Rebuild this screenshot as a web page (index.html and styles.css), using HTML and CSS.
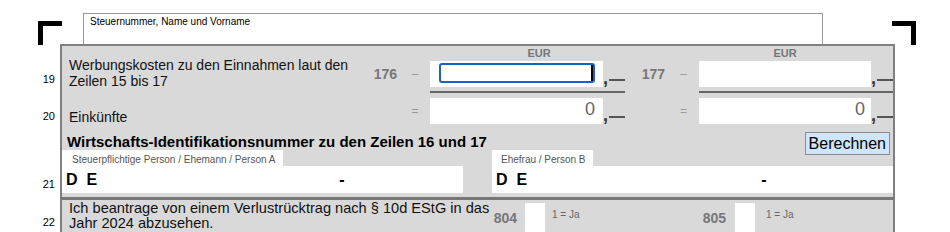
FILE: index.html
```html
<!DOCTYPE html>
<html lang="de">
<head>
    <meta charset="UTF-8">
    <title>Anlage – Werbungskosten</title>
    <link rel="stylesheet" href="styles.css">
</head>
<body>
    <div class="sheet">
        <div class="head">
            <div class="mark mark-left"></div>
            <div class="taxbox">Steuernummer, Name und Vorname</div>
            <div class="mark mark-right"></div>
        </div>

        <div class="line">
            <div class="num num-19">19</div>
            <div class="panel panel-top amounts">
                <div class="desc desc-19">Werbungskosten zu den Einnahmen laut den<br>Zeilen 15 bis 17</div>
                <div class="amt amt-a">
                    <div class="eur eur-a">EUR</div>
                    <span class="code">176</span>
                    <span class="sign">–</span>
                    <div class="field"><div class="focus"><i class="caret"></i></div></div>
                    <div class="tail"><b>,</b><i></i></div>
                    <div class="rule"></div>
                </div>
                <div class="amt amt-b">
                    <div class="eur">EUR</div>
                    <span class="code">177</span>
                    <span class="sign">–</span>
                    <div class="field"></div>
                    <div class="tail"><b>,</b><i></i></div>
                    <div class="rule"></div>
                </div>
            </div>
        </div>

        <div class="line">
            <div class="num num-20">20</div>
            <div class="panel amounts">
                <div class="desc desc-20">Einkünfte</div>
                <div class="amt amt-a amt-plain">
                    <span class="code"></span>
                    <span class="sign">=</span>
                    <div class="field value">0</div>
                    <div class="tail"><b>,</b><i></i></div>
                </div>
                <div class="amt amt-b amt-plain">
                    <span class="code"></span>
                    <span class="sign">=</span>
                    <div class="field value value-b">0</div>
                    <div class="tail"><b>,</b><i></i></div>
                </div>
            </div>
        </div>

        <div class="line">
            <div class="num num-21">21</div>
            <div class="panel ident">
                <h2 class="ident-title">Wirtschafts-Identifikationsnummer zu den Zeilen 16 und 17</h2>
                <button class="calc">Berechnen</button>
                <div class="tab tab-a">Steuerpflichtige Person / Ehemann / Person A</div>
                <div class="tab tab-b">Ehefrau / Person B</div>
                <div class="idnr idnr-a"><span>D</span><span class="e">E</span><span class="hy hy-a">-</span></div>
                <div class="idnr idnr-b"><span>D</span><span class="e">E</span><span class="hy hy-b">-</span></div>
            </div>
        </div>

        <div class="line">
            <div class="num num-22">22</div>
            <div class="panel panel-split choice">
                <div class="desc desc-22">Ich beantrage von einem Verlustrücktrag nach § 10d EStG in das<br>Jahr 2024 abzusehen.</div>
                <div class="opt opt-a">
                    <span class="code">804</span>
                    <div class="box"></div>
                    <span class="ja">1 = Ja</span>
                </div>
                <div class="opt opt-b">
                    <span class="code">805</span>
                    <div class="box"></div>
                    <span class="ja">1 = Ja</span>
                </div>
            </div>
        </div>
    </div>
</body>
</html>
```

FILE: styles.css
```css
body {
    margin: 0;
    background: #fff;
    color: #111;
    font-family: "Liberation Sans", Arial, sans-serif;
}
.sheet {
    width: 950px;
}

/* header with corner marks */
.head {
    display: flex;
    align-items: flex-start;
    height: 44px;
}
.mark {
    width: 24px;
    height: 24px;
    margin-top: 21px;
    box-sizing: border-box;
}
.mark-left {
    margin-left: 38px;
    border-top: 5px solid #000;
    border-left: 5px solid #000;
}
.mark-right {
    margin-left: 69px;
    border-top: 5px solid #000;
    border-right: 5px solid #000;
}
.taxbox {
    margin: 13px 0 0 21px;
    width: 740px;
    height: 31px;
    box-sizing: border-box;
    border: 1px solid #999;
    border-bottom: none;
    padding: 2px 0 0 6px;
    font-size: 10px;
    line-height: 12px;
    color: #000;
}

/* form lines */
.line {
    display: grid;
    grid-template-columns: 60px 835px;
}
.num {
    align-self: end;
    padding-right: 5px;
    font-size: 11px;
    line-height: 13px;
    text-align: right;
    color: #000;
}
.num-19 { padding-bottom: 8px; }
.num-20 { padding-bottom: 5px; }
.num-21 { padding-bottom: 6px; }
.num-22 {
    align-self: start;
    padding-top: 19px;
}
.panel {
    background: #d9d9d9;
    border-left: 2px solid #808080;
    border-right: 2px solid #808080;
}
.panel-top {
    border-top: 2px solid #808080;
}
.panel-split {
    border-top: 3px solid #777;
}
.desc {
    padding-left: 7px;
    font-size: 14px;
    line-height: 16px;
    white-space: nowrap;
}
.desc-19 { padding-bottom: 5px; }
.desc-20 { padding-bottom: 3px; }

/* amount columns */
.amounts {
    display: grid;
    grid-template-columns: 308px 255px 268px;
    align-items: end;
}
.amt {
    display: grid;
    align-items: center;
}
.amt > * {
    grid-row: 2;
}
.amt-plain > * {
    grid-row: 1;
}
.amt-a {
    grid-template-columns: 30px 30px 173px 22px;
}
.amt-b {
    grid-template-columns: 43px 31px 172px 22px;
}
.amt-plain {
    padding: 4px 0;
}
.amt .eur {
    grid-column: 3;
    grid-row: 1;
    height: 15px;
    font-size: 11px;
    line-height: 14px;
    font-weight: bold;
    text-align: center;
    color: #777;
}
.amt .eur-a {
    padding-left: 45px;
}
.code {
    grid-column: 1;
    padding-right: 3px;
    font-size: 14px;
    font-weight: bold;
    text-align: right;
    color: #777;
}
.sign {
    grid-column: 2;
    font-size: 12px;
    text-align: center;
    color: #999;
}
.field {
    grid-column: 3;
    height: 26px;
    background: #fff;
}
.focus {
    display: flex;
    justify-content: flex-end;
    height: 20px;
    margin: 2px 8px 4px 9px;
    box-sizing: border-box;
    border: 2px solid #1565c0;
    border-radius: 3px;
}
.caret {
    width: 2px;
    background: #000;
}
.value {
    padding-right: 8px;
    font-size: 18px;
    line-height: 23px;
    text-align: right;
    color: #666;
}
.value-b {
    padding-right: 6px;
}
.tail {
    grid-column: 4;
    align-self: end;
    display: flex;
    align-items: flex-end;
    height: 26px;
}
.tail b {
    width: 5px;
    font-size: 18px;
    line-height: 18px;
    color: #333;
}
.tail i {
    width: 16px;
    height: 2px;
    margin: 0 0 6px 1px;
    background: #555;
}
.amt .rule {
    grid-column: 3 / 5;
    grid-row: 3;
    height: 2px;
    margin: 4px 0 1px;
    background: #666;
}

/* identification number */
.ident {
    display: grid;
    grid-template-columns: 401px 29px 401px;
    grid-template-rows: 22px 16px 27px;
    padding-bottom: 4px;
}
.ident-title {
    grid-column: 1 / 3;
    grid-row: 1;
    margin: 0;
    padding: 5px 0 0 5px;
    font-size: 15px;
    line-height: 17px;
    color: #000;
}
.calc {
    grid-column: 3;
    grid-row: 1 / 3;
    justify-self: end;
    align-self: start;
    height: 23px;
    margin: 4px 3px 0 0;
    padding: 0 3px;
    border: 1px solid #8c8c8c;
    border-radius: 0;
    background: #cfe5fa;
    font-family: "Liberation Sans", Arial, sans-serif;
    font-size: 16px;
    color: #000;
}
.tab {
    grid-row: 2;
    justify-self: start;
    padding: 3px 8px 0 10px;
    background: #fff;
    font-size: 10px;
    line-height: 13px;
    color: #555;
}
.tab-a { grid-column: 1; }
.tab-b {
    grid-column: 3;
    padding: 3px 7px 0 9px;
}
.idnr {
    grid-row: 3;
    display: flex;
    align-items: center;
    padding-left: 4px;
    background: #fff;
    font-size: 16px;
    font-weight: bold;
    color: #000;
}
.idnr-a { grid-column: 1; }
.idnr-b { grid-column: 3; }
.idnr .e { margin-left: 9px; }
.hy-a { margin-left: 242px; }
.hy-b { margin-left: 234px; }

/* choice line */
.choice {
    display: grid;
    grid-template-columns: 427px 211px 193px;
    align-items: start;
    padding-bottom: 6px;
}
.desc-22 {
    padding-top: 1px;
    font-size: 14.6px;
    line-height: 15px;
}
.opt {
    display: flex;
    align-items: flex-start;
}
.opt .code {
    margin-top: 10px;
    padding: 0;
    line-height: 16px;
}
.opt-a .code { width: 28px; }
.opt-b .code { width: 26px; }
.box {
    width: 20px;
    height: 30px;
    margin: 3px 0 0 8px;
    background: #fff;
}
.opt-b .box { margin-left: 9px; }
.ja {
    margin: 9px 0 0 7px;
    font-size: 10px;
    line-height: 12px;
    color: #666;
}
.opt-b .ja { margin-left: 11px; }
```
